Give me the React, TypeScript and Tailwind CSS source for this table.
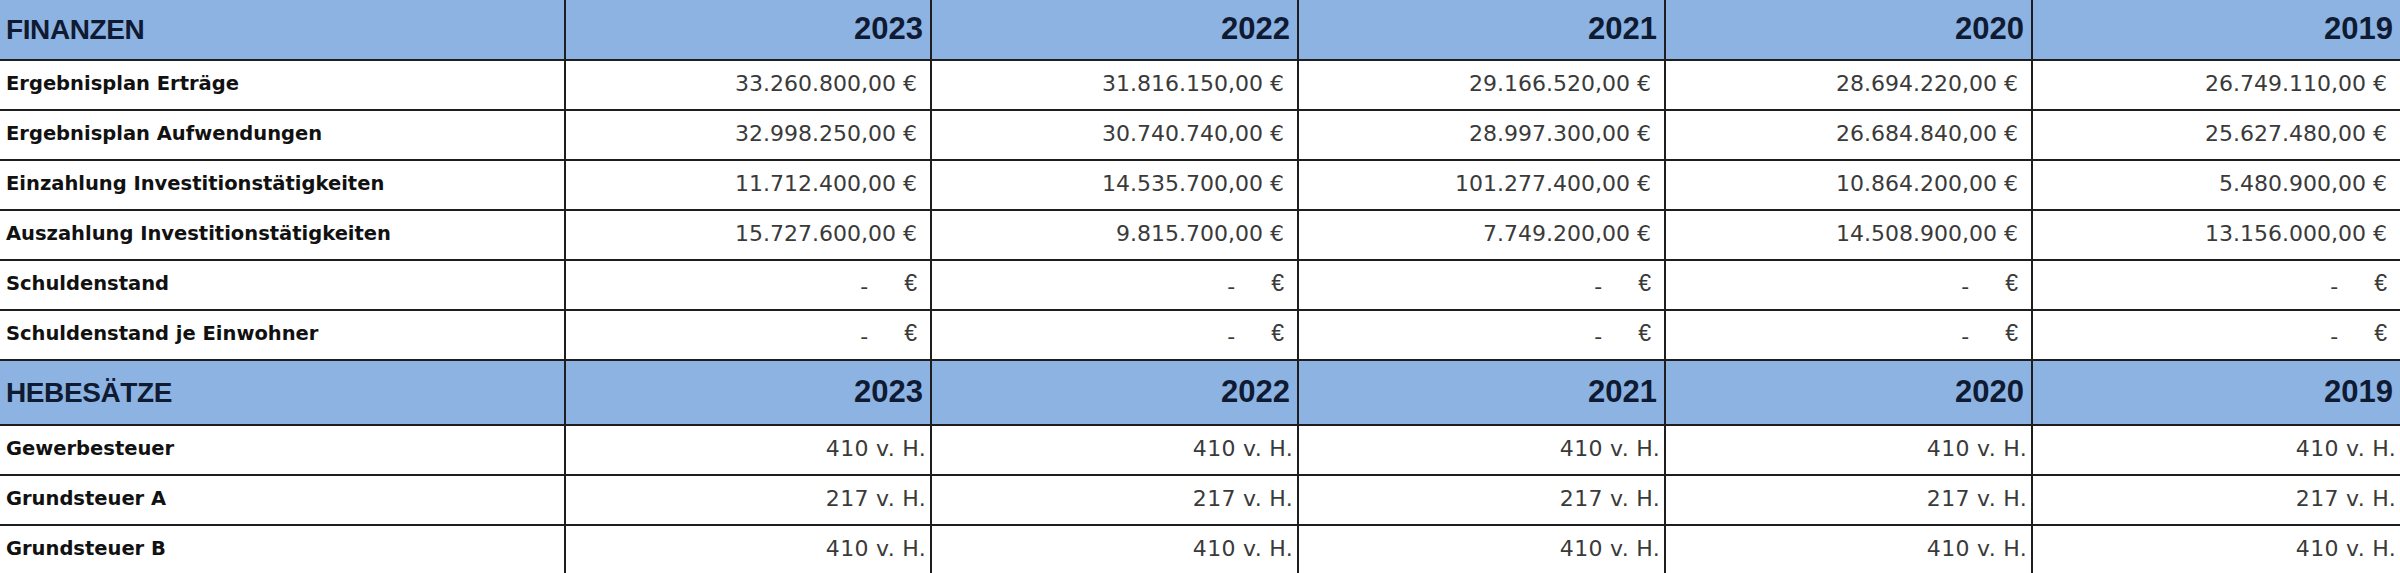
import React from "react";

type Cell = string | null;

const years = ["2023", "2022", "2021", "2020", "2019"];

const finanzen: { label: string; values: Cell[] }[] = [
  {
    label: "Ergebnisplan Erträge",
    values: ["33.260.800,00 €", "31.816.150,00 €", "29.166.520,00 €", "28.694.220,00 €", "26.749.110,00 €"],
  },
  {
    label: "Ergebnisplan Aufwendungen",
    values: ["32.998.250,00 €", "30.740.740,00 €", "28.997.300,00 €", "26.684.840,00 €", "25.627.480,00 €"],
  },
  {
    label: "Einzahlung Investitionstätigkeiten",
    values: ["11.712.400,00 €", "14.535.700,00 €", "101.277.400,00 €", "10.864.200,00 €", "5.480.900,00 €"],
  },
  {
    label: "Auszahlung Investitionstätigkeiten",
    values: ["15.727.600,00 €", "9.815.700,00 €", "7.749.200,00 €", "14.508.900,00 €", "13.156.000,00 €"],
  },
  { label: "Schuldenstand", values: [null, null, null, null, null] },
  { label: "Schuldenstand je Einwohner", values: [null, null, null, null, null] },
];

const hebesaetze = [
  { label: "Gewerbesteuer", value: "410 v. H." },
  { label: "Grundsteuer A", value: "217 v. H." },
  { label: "Grundsteuer B", value: "410 v. H." },
];

const grid = "grid grid-cols-[566px_366px_367px_367px_367px_367px]";
const line = "border-[#1e1e1e]";

function HeaderRow({ title, height }: { title: string; height: string }) {
  return (
    <div className={`${grid} ${height} bg-[#8db3e2]`}>
      <div className={`flex items-center pl-[6px] border-b-2 border-r-2 ${line}`}>
        <span className="font-['Liberation_Sans',Arial,sans-serif] font-bold text-[28px] text-[#0f1a33] tracking-[-0.4px]">
          {title}
        </span>
      </div>
      {years.map((y, i) => (
        <div
          key={y}
          className={`flex items-center justify-end pr-[7px] border-b-2 ${line} ${i < 4 ? "border-r-2" : ""}`}
        >
          <span className="font-['Liberation_Sans',Arial,sans-serif] font-bold text-[31px] text-[#0f1a33]">{y}</span>
        </div>
      ))}
    </div>
  );
}

function Label({ text }: { text: string }) {
  return (
    <div className={`flex items-center pl-[6px] pb-[3px] border-b-2 border-r-2 ${line}`}>
      <span className="font-['DejaVu_Sans',sans-serif] font-bold text-[19.5px] text-[#111]">{text}</span>
    </div>
  );
}

export default function App() {
  return (
    <div className="w-[2400px] h-[573px] overflow-hidden bg-white">
      <HeaderRow title="FINANZEN" height="h-[61px]" />
      {finanzen.map((row) => (
        <div key={row.label} className={`${grid} h-[50px]`}>
          <Label text={row.label} />
          {row.values.map((v, i) => (
            <div
              key={i}
              className={`flex items-center justify-end pr-[13px] pb-[3px] border-b-2 ${line} ${i < 4 ? "border-r-2" : ""} font-['DejaVu_Sans',sans-serif] text-[22px] text-[#3a3a3a]`}
            >
              {v ? (
                <span>{v}</span>
              ) : (
                <span className="flex items-center gap-[36px]">
                  <span className="translate-y-[3px]">-</span>
                  <span className="font-['Liberation_Sans',Arial,sans-serif] text-[23px]">€</span>
                </span>
              )}
            </div>
          ))}
        </div>
      ))}
      <HeaderRow title="HEBESÄTZE" height="h-[65px]" />
      {hebesaetze.map((row) => (
        <div key={row.label} className={`${grid} h-[50px]`}>
          <Label text={row.label} />
          {years.map((y, i) => (
            <div
              key={y}
              className={`flex items-center justify-end pr-[4px] pb-[3px] border-b-2 ${line} ${i < 4 ? "border-r-2" : ""} font-['DejaVu_Sans',sans-serif] text-[22px] tracking-[0.3px] text-[#3a3a3a]`}
            >
              {row.value}
            </div>
          ))}
        </div>
      ))}
    </div>
  );
}
